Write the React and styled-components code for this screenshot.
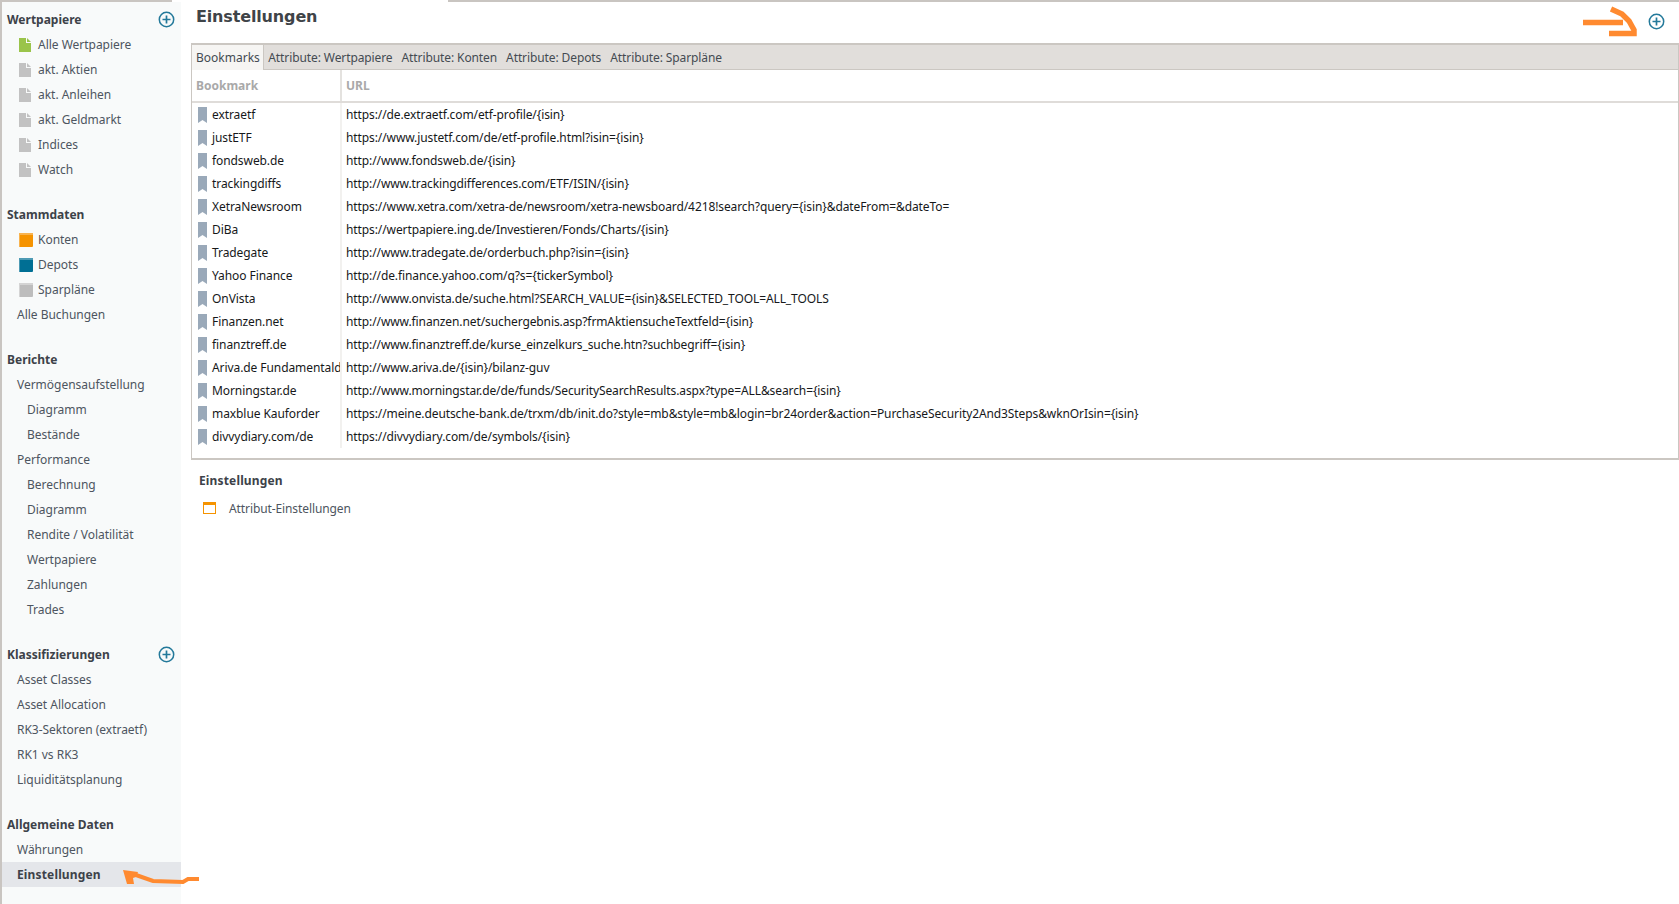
import React from "react";
import styled, { createGlobalStyle } from "styled-components";

const sections = [
  {
    title: "Wertpapiere",
    add: true,
    items: [
      { label: "Alle Wertpapiere", icon: "doc", color: "#9ac44a" },
      { label: "akt. Aktien", icon: "doc" },
      { label: "akt. Anleihen", icon: "doc" },
      { label: "akt. Geldmarkt", icon: "doc" },
      { label: "Indices", icon: "doc" },
      { label: "Watch", icon: "doc" },
    ],
  },
  {
    title: "Stammdaten",
    items: [
      { label: "Konten", icon: "box", color: "#f59300", light: "#f8b34f" },
      { label: "Depots", icon: "box", color: "#006f94", light: "#4d9ab4" },
      { label: "Sparpläne", icon: "box", color: "#bdbdbd", light: "#d4d4d4" },
      { label: "Alle Buchungen", level: 1 },
    ],
  },
  {
    title: "Berichte",
    items: [
      { label: "Vermögensaufstellung", level: 1 },
      { label: "Diagramm", level: 2 },
      { label: "Bestände", level: 2 },
      { label: "Performance", level: 1 },
      { label: "Berechnung", level: 2 },
      { label: "Diagramm", level: 2 },
      { label: "Rendite / Volatilität", level: 2 },
      { label: "Wertpapiere", level: 2 },
      { label: "Zahlungen", level: 2 },
      { label: "Trades", level: 2 },
    ],
  },
  {
    title: "Klassifizierungen",
    add: true,
    items: [
      { label: "Asset Classes", level: 1 },
      { label: "Asset Allocation", level: 1 },
      { label: "RK3-Sektoren (extraetf)", level: 1 },
      { label: "RK1 vs RK3", level: 1 },
      { label: "Liquiditätsplanung", level: 1 },
    ],
  },
  {
    title: "Allgemeine Daten",
    items: [
      { label: "Währungen", level: 1 },
      { label: "Einstellungen", level: 1, active: true },
    ],
  },
];

const tabs = [
  "Bookmarks",
  "Attribute: Wertpapiere",
  "Attribute: Konten",
  "Attribute: Depots",
  "Attribute: Sparpläne",
];

const bookmarks = [
  ["extraetf", "https://de.extraetf.com/etf-profile/{isin}"],
  ["justETF", "https://www.justetf.com/de/etf-profile.html?isin={isin}"],
  ["fondsweb.de", "http://www.fondsweb.de/{isin}"],
  ["trackingdiffs", "http://www.trackingdifferences.com/ETF/ISIN/{isin}"],
  [
    "XetraNewsroom",
    "https://www.xetra.com/xetra-de/newsroom/xetra-newsboard/4218!search?query={isin}&dateFrom=&dateTo=",
  ],
  ["DiBa", "https://wertpapiere.ing.de/Investieren/Fonds/Charts/{isin}"],
  ["Tradegate", "http://www.tradegate.de/orderbuch.php?isin={isin}"],
  ["Yahoo Finance", "http://de.finance.yahoo.com/q?s={tickerSymbol}"],
  [
    "OnVista",
    "http://www.onvista.de/suche.html?SEARCH_VALUE={isin}&SELECTED_TOOL=ALL_TOOLS",
  ],
  [
    "Finanzen.net",
    "http://www.finanzen.net/suchergebnis.asp?frmAktiensucheTextfeld={isin}",
  ],
  [
    "finanztreff.de",
    "http://www.finanztreff.de/kurse_einzelkurs_suche.htn?suchbegriff={isin}",
  ],
  ["Ariva.de Fundamentald", "http://www.ariva.de/{isin}/bilanz-guv"],
  [
    "Morningstar.de",
    "http://www.morningstar.de/de/funds/SecuritySearchResults.aspx?type=ALL&search={isin}",
  ],
  [
    "maxblue Kauforder",
    "https://meine.deutsche-bank.de/trxm/db/init.do?style=mb&style=mb&login=br24order&action=PurchaseSecurity2And3Steps&wknOrIsin={isin}",
  ],
  ["divvydiary.com/de", "https://divvydiary.com/de/symbols/{isin}"],
];

const AddIcon = () => (
  <svg width="17" height="17" viewBox="0 0 17 17" fill="none">
    <circle cx="8.5" cy="8.5" r="7.2" stroke="#23799a" strokeWidth="1.5" />
    <path d="M8.5 4.500v8M4.500 8.500h8" stroke="#23799a" strokeWidth="1.700" />
  </svg>
);

const DocIcon = ({ color = "#c2c2c2" }) => (
  <svg width="12" height="14" viewBox="0 0 12 14">
    <path d="M0 0h7v5h5v9H0z" fill={color} />
    <path d="M8 0l4 4H8z" fill={color} />
  </svg>
);

const BoxIcon = ({ color, light }) => (
  <svg width="14" height="14" viewBox="0 0 14 14">
    <rect width="14" height="14" rx="1" fill={color} />
    <rect width="14" height="2" fill={light} />
    <rect width="1" height="14" fill={light} />
  </svg>
);

const BookmarkIcon = () => (
  <Mark width="9" height="16" viewBox="0 0 9 16">
    <path d="M0 0h9v16L4.500 13 0 16z" fill="#9aa9b9" />
  </Mark>
);

const WindowIcon = () => (
  <svg width="13" height="12" viewBox="0 0 13 12" fill="none">
    <rect x="0.5" y="0.5" width="12" height="11" stroke="#f59300" />
    <rect x="0.5" y="0.5" width="12" height="2.500" fill="#f59300" />
  </svg>
);

const App = () => {
  return (
    <Shell>
      <GlobalStyle />
      <TopEdge>
        <EdgeLine $width="172px" />
        <EdgeGap />
        <EdgeLine $grow />
      </TopEdge>
      <Body>
        <Sidebar>
          {sections.map((section) => (
            <Section key={section.title}>
              <SectionHead>
                {section.title}
                {section.add && (
                  <SideAdd>
                    <AddIcon />
                  </SideAdd>
                )}
              </SectionHead>
              {section.items.map((item, i) => (
                <NavRow key={i} $level={item.level} $active={item.active}>
                  {item.icon === "doc" && (
                    <NavIcon>
                      <DocIcon color={item.color} />
                    </NavIcon>
                  )}
                  {item.icon === "box" && (
                    <NavIcon>
                      <BoxIcon color={item.color} light={item.light} />
                    </NavIcon>
                  )}
                  {item.label}
                </NavRow>
              ))}
            </Section>
          ))}
        </Sidebar>
        <Main>
          <TitleBar>
            <Title>Einstellungen</Title>
            <MainAdd>
              <AddIcon />
            </MainAdd>
          </TitleBar>
          <Folder>
            <TabBar>
              {tabs.map((tab, i) => (
                <Tab key={tab} $active={i === 0}>
                  {tab}
                </Tab>
              ))}
            </TabBar>
            <Table>
              <thead>
                <tr>
                  <HeadCell $first>Bookmark</HeadCell>
                  <HeadCell>URL</HeadCell>
                </tr>
              </thead>
              <tbody>
                {bookmarks.map(([name, url]) => (
                  <tr key={name}>
                    <NameCell>
                      <NameInner>
                        <BookmarkIcon />
                        <NameText>{name}</NameText>
                      </NameInner>
                    </NameCell>
                    <UrlCell>{url}</UrlCell>
                  </tr>
                ))}
              </tbody>
            </Table>
          </Folder>
          <Settings>
            <SettingsHead>Einstellungen</SettingsHead>
            <SettingsRow>
              <WindowIcon />
              Attribut-Einstellungen
            </SettingsRow>
          </Settings>
        </Main>
      </Body>
      <Scribble width="1679" height="904" viewBox="0 0 1679 904" fill="none">
        <path
          d="M1583 22.500h40M1611 9l11 5 7 7 5 9v3.500h-25"
          stroke="#ff8a30"
          strokeWidth="5.500"
        />
        <path d="M123 870l15 2-2 5-3 1 1 6-7 0z" fill="#ff8a30" />
        <path d="M136 875l17 6 30 1 5-3h11" stroke="#ff8a30" strokeWidth="4" />
      </Scribble>
    </Shell>
  );
};
export default App;

const GlobalStyle = createGlobalStyle`
  html, body {
    margin: 0;
    padding: 0;
    background: #fff;
  }
  * {
    box-sizing: border-box;
  }
`;

const Shell = styled.div`
  position: relative;
  width: 1679px;
  height: 904px;
  overflow: hidden;
  display: flex;
  flex-direction: column;
  font-family: "Noto Sans", "Open Sans", sans-serif;
  font-size: 12px;
  background: #fff;
`;
const TopEdge = styled.div`
  display: flex;
  height: 2px;
  flex-shrink: 0;
`;
const EdgeLine = styled.div`
  height: 2px;
  background: #c9c5c1;
  width: ${(p) => p.$width || "auto"};
  flex-grow: ${(p) => (p.$grow ? 1 : 0)};
`;
const EdgeGap = styled.div`
  width: 276px;
`;
const Body = styled.div`
  display: flex;
  flex: 1;
  min-height: 0;
`;
const Sidebar = styled.nav`
  width: 181px;
  flex-shrink: 0;
  background: #f8fafa;
  border-left: 2px solid #c9c5c1;
  padding-top: 5px;
  display: flex;
  flex-direction: column;
  gap: 20px;
`;
const Section = styled.div``;
const SectionHead = styled.div`
  position: relative;
  height: 25px;
  line-height: 25px;
  padding-left: 5px;
  font-weight: 700;
  color: #3d4249;
`;
const SideAdd = styled.span`
  position: absolute;
  top: 4px;
  right: 6px;
  display: flex;
`;
const NavRow = styled.div`
  display: flex;
  align-items: center;
  height: 25px;
  white-space: nowrap;
  color: ${(p) => (p.$active ? "#3d4249" : "#4d5560")};
  font-weight: ${(p) => (p.$active ? 700 : 400)};
  letter-spacing: ${(p) => (p.$active ? "0.15px" : "-0.02px")};
  background: ${(p) => (p.$active ? "#e4e6ea" : "transparent")};
  padding-left: ${(p) =>
    p.$level === 2 ? "25px" : p.$level === 1 ? "15px" : "17px"};
`;
const NavIcon = styled.span`
  display: flex;
  width: 19px;
  flex-shrink: 0;
`;
const Main = styled.main`
  flex: 1;
  min-width: 0;
  padding-left: 10px;
  display: flex;
  flex-direction: column;
`;
const TitleBar = styled.div`
  display: flex;
  justify-content: space-between;
  height: 41px;
`;
const Title = styled.h1`
  margin: 0;
  padding-left: 5px;
  font-family: "DejaVu Sans", sans-serif;
  font-size: 16px;
  font-weight: 700;
  line-height: 30px;
  letter-spacing: -0.15px;
  color: #3f4448;
`;
const MainAdd = styled.span`
  display: flex;
  padding: 11px 14px 0 0;
`;
const Folder = styled.section`
  border: 1px solid #cbc7c2;
  border-top-width: 2px;
  border-bottom-width: 2px;
  height: 417px;
`;
const TabBar = styled.div`
  display: flex;
  height: 25px;
  background: #e1dedb;
  border-bottom: 1px solid #cbc7c2;
  letter-spacing: -0.1px;
`;
const Tab = styled.div`
  line-height: 25px;
  padding: 0 4.500px;
  color: #444b52;
  ${(p) =>
    p.$active &&
    `
    height: 25px;
    background: #f6f5f3;
    border-right: 1px solid #cbc7c2;
    padding: 0 3px 0 4px;
    letter-spacing: 0;
  `}
`;
const Table = styled.table`
  width: 100%;
  table-layout: fixed;
  border-collapse: collapse;
`;
const HeadCell = styled.th`
  height: 32px;
  padding: 0 4px;
  text-align: left;
  font-weight: 700;
  color: #a9a9a9;
  border-bottom: 2px solid #dfdcd9;
  border-right: ${(p) => (p.$first ? "2px solid #e4e2df" : "none")};
  width: ${(p) => (p.$first ? "149px" : "auto")};
`;
const NameCell = styled.td`
  height: 23px;
  padding: 0;
  border-right: 2px solid #f2f1ef;
  overflow: hidden;
`;
const NameInner = styled.div`
  display: flex;
  align-items: center;
  gap: 5px;
  padding-left: 6px;
  height: 23px;
  white-space: nowrap;
  overflow: hidden;
`;
const Mark = styled.svg`
  flex-shrink: 0;
`;
const NameText = styled.span`
  color: #16181a;
  letter-spacing: -0.08px;
`;
const UrlCell = styled.td`
  height: 23px;
  padding: 0 4px;
  color: #16181a;
  white-space: nowrap;
  letter-spacing: -0.1px;
`;
const Settings = styled.section`
  padding: 9px 0 0 8px;
`;
const SettingsHead = styled.h2`
  margin: 0;
  font-size: 12px;
  font-weight: 700;
  line-height: 24px;
  letter-spacing: 0.15px;
  color: #3d4249;
`;
const SettingsRow = styled.div`
  display: flex;
  align-items: center;
  gap: 13px;
  height: 30px;
  padding-left: 4px;
  letter-spacing: -0.1px;
  color: #4d5560;
`;
const Scribble = styled.svg`
  position: absolute;
  top: 0;
  left: 0;
  pointer-events: none;
`;
